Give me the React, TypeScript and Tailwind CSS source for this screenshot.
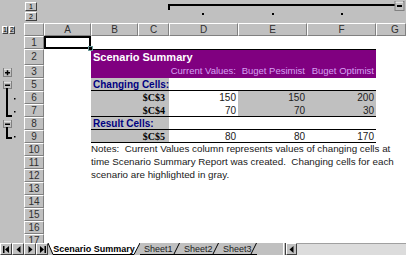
import React from "react";

const hdr =
  "flex items-center justify-center bg-[#c0c0c0] border-t border-t-white border-l border-l-white border-r border-r-[#808080] border-b border-b-[#808080] text-[10px] text-[#303030] leading-none";

const btn =
  "flex items-center justify-center bg-[#c0c0c0] border-t border-t-white border-l border-l-white border-r border-r-[#404040] border-b border-b-[#404040] text-[7px] leading-none text-black";

function RowHead({ n }: { n: number }) {
  return <div className={`w-[20px] shrink-0 h-full ${hdr}`}>{n}</div>;
}

function Row({ n, h, children }: { n: number; h?: string; children?: React.ReactNode }) {
  return (
    <div className={`flex shrink-0 ${h ?? "h-[13px]"}`}>
      <RowHead n={n} />
      <div className="flex flex-1 h-full bg-white">
        <div className="w-[47px] shrink-0" />
        {children}
      </div>
    </div>
  );
}

function Val({ w, grey, children }: { w: string; grey?: boolean; children?: React.ReactNode }) {
  return (
    <div
      className={`${w} shrink-0 h-full flex items-center justify-end pr-[2px] text-[10px] text-[#202020] ${
        grey ? "bg-[#c0c0c0]" : "bg-white"
      }`}
    >
      {children}
    </div>
  );
}

function Label({ children }: { children: React.ReactNode }) {
  return (
    <div className="w-[78px] shrink-0 h-full bg-[#c0c0c0] flex items-center pl-[2px] text-[10px] font-bold text-[#000080] whitespace-nowrap">
      {children}
    </div>
  );
}

function Ref({ children }: { children: React.ReactNode }) {
  return (
    <div className="w-[78px] shrink-0 h-full bg-[#c0c0c0] flex items-center justify-end pr-[4px] font-['Liberation_Serif',serif] text-[10px] font-bold text-black">
      {children}
    </div>
  );
}

function DataRow({ n, r, v, greyScen, line }: { n: number; r: string; v: string[]; greyScen?: boolean; line?: boolean }) {
  return (
    <Row n={n}>
      <div className={`flex h-full ${line ? "border-b border-black" : ""}`}>
        <Ref>{r}</Ref>
        <Val w="w-[69px]">{v[0]}</Val>
        <Val w="w-[69px]" grey={greyScen}>{v[1]}</Val>
        <Val w="w-[69px]" grey={greyScen}>{v[2]}</Val>
      </div>
    </Row>
  );
}

function Note({ n, text }: { n: number; text?: string }) {
  return (
    <Row n={n}>
      <div className="flex items-center h-full whitespace-pre text-[9.8px] text-[#202020]">{text}</div>
    </Row>
  );
}

function NavIcon({ kind }: { kind: "first" | "prev" | "next" | "last" }) {
  return (
    <svg width="7" height="7" viewBox="0 0 7 7">
      {kind === "first" && (
        <>
          <rect x="0" y="0" width="1.5" height="7" fill="#000" />
          <polygon points="6,0 2,3.5 6,7" fill="#000" />
        </>
      )}
      {kind === "prev" && <polygon points="5.5,0 1.5,3.5 5.5,7" fill="#000" />}
      {kind === "next" && <polygon points="1.5,0 5.5,3.5 1.5,7" fill="#000" />}
      {kind === "last" && (
        <>
          <polygon points="1,0 5,3.5 1,7" fill="#000" />
          <rect x="5.5" y="0" width="1.5" height="7" fill="#000" />
        </>
      )}
    </svg>
  );
}

function Tab({ w, label, active }: { w: string; label: string; active?: boolean }) {
  return (
    <div className={`${w} shrink-0 h-full relative flex items-center ${active ? "justify-center" : "pl-[4px]"}`}>
      <svg className="absolute inset-0" width="100%" height="12" preserveAspectRatio="none">
        {active ? (
          <>
            <polygon points="0,0 92,0 86,11.5 5,11.5" fill="#fff" />
            <line x1="0" y1="0" x2="5" y2="11.5" stroke="#000" />
            <line x1="5" y1="11.5" x2="86" y2="11.5" stroke="#000" />
            <line x1="86" y1="11.5" x2="92" y2="0" stroke="#000" />
          </>
        ) : (
          <line x1="0" y1="11.5" x2="100%" y2="11.5" stroke="#000" />
        )}
      </svg>
      {!active && (
        <svg className="absolute right-0 top-0" width="7" height="12">
          <line x1="0.5" y1="12" x2="6.5" y2="0" stroke="#000" />
        </svg>
      )}
      <span className={`relative text-[9px] leading-none ${active ? "font-bold text-black" : "text-[#202020]"}`}>
        {label}
      </span>
    </div>
  );
}

export default function App() {
  return (
    <div className="w-[406px] h-[255px] overflow-hidden bg-[#c0c0c0] flex flex-col font-['Liberation_Sans',Arial,sans-serif] select-none">
      {/* column outline strip */}
      <div className="h-[23px] shrink-0 flex">
        <div className="w-[25px] shrink-0" />
        <div className="w-[12px] shrink-0 flex flex-col gap-[1px] pt-[2px]">
          <div className={`h-[9px] ${btn}`}>1</div>
          <div className={`h-[9px] ${btn}`}>2</div>
        </div>
        <div className="flex-1 relative">
          <svg className="absolute inset-0" width="369" height="23">
            <line x1="131" y1="5" x2="358" y2="5" stroke="#000" strokeWidth="2" />
            <line x1="132" y1="5" x2="132" y2="10" stroke="#000" strokeWidth="2" />
            <rect x="165" y="13" width="2" height="2" fill="#000" />
            <rect x="235" y="13" width="2" height="2" fill="#000" />
            <rect x="304" y="13" width="2" height="2" fill="#000" />
            <rect x="358" y="1.5" width="9" height="9" fill="#c0c0c0" stroke="#808080" />
            <line x1="358.5" y1="2" x2="366" y2="2" stroke="#fff" />
            <rect x="360" y="5" width="5" height="2" fill="#000" />
          </svg>
        </div>
      </div>

      {/* column headers */}
      <div className="h-[13px] shrink-0 flex">
        <div className="w-[24px] shrink-0 flex items-center gap-[1px] pl-[2px]">
          <div className={`w-[6px] h-[8px] ${btn}`}>1</div>
          <div className={`w-[6px] h-[8px] ${btn}`}>2</div>
        </div>
        <div className={`w-[20px] shrink-0 ${hdr}`} />
        <div className={`w-[47px] shrink-0 ${hdr}`}>A</div>
        <div className={`w-[47px] shrink-0 ${hdr}`}>B</div>
        <div className={`w-[31px] shrink-0 ${hdr}`}>C</div>
        <div className={`w-[69px] shrink-0 ${hdr}`}>D</div>
        <div className={`w-[69px] shrink-0 ${hdr}`}>E</div>
        <div className={`w-[69px] shrink-0 ${hdr}`}>F</div>
        <div className={`flex-1 pl-[8px] ${hdr}`}>G</div>
      </div>

      {/* sheet body */}
      <div className="flex flex-1 min-h-0 overflow-hidden">
        <div className="w-[24px] shrink-0 relative">
          <svg className="absolute inset-0" width="24" height="207">
            {/* + at row 3 */}
            <rect x="3.5" y="32.5" width="8" height="8" fill="#c0c0c0" stroke="#808080" />
            <line x1="4" y1="33" x2="11" y2="33" stroke="#fff" />
            <rect x="5" y="36" width="5" height="1.5" fill="#000" />
            <rect x="6.75" y="34.25" width="1.5" height="5" fill="#000" />
            {/* - at row 5 */}
            <rect x="3.5" y="45.5" width="8" height="7" fill="#c0c0c0" stroke="#808080" />
            <line x1="4" y1="46" x2="11" y2="46" stroke="#fff" />
            <rect x="5" y="48.5" width="5" height="1.5" fill="#000" />
            <line x1="7" y1="52" x2="7" y2="81" stroke="#000" strokeWidth="2" />
            <line x1="6" y1="80" x2="12" y2="80" stroke="#000" strokeWidth="2" />
            <rect x="14" y="62" width="1.5" height="1.5" fill="#000" />
            <rect x="14" y="75" width="1.5" height="1.5" fill="#000" />
            {/* - at row 8 */}
            <rect x="3.5" y="84.5" width="8" height="7" fill="#c0c0c0" stroke="#808080" />
            <line x1="4" y1="85" x2="11" y2="85" stroke="#fff" />
            <rect x="5" y="87.5" width="5" height="1.5" fill="#000" />
            <line x1="7" y1="91" x2="7" y2="103" stroke="#000" strokeWidth="2" />
            <line x1="6" y1="102" x2="12" y2="102" stroke="#000" strokeWidth="2" />
            <rect x="14" y="100" width="1.5" height="1.5" fill="#000" />
          </svg>
        </div>

        <div className="flex-1 flex flex-col">
          <div className="flex shrink-0 h-[13px]">
            <RowHead n={1} />
            <div className="flex flex-1 h-full bg-white">
              <div className="w-[47px] shrink-0 h-full border-2 border-black relative">
                <div className="absolute -right-[4px] -bottom-[4px] w-[5px] h-[5px] bg-black border border-[#6a9a9a]" />
              </div>
            </div>
          </div>

          <Row n={2} h="h-[16px]">
            <div className="w-[285px] shrink-0 h-full bg-[#800080] border-t border-black flex items-center pl-[2px] text-[11px] font-bold text-white">
              Scenario Summary
            </div>
          </Row>

          <Row n={3}>
            <div className="w-[285px] shrink-0 h-full bg-[#800080] flex text-[9.5px] text-[#d6a0f2]">
              <div className="w-[78px] shrink-0" />
              <div className="w-[69px] shrink-0 flex items-center justify-end pr-[2px] whitespace-nowrap">Current Values:</div>
              <div className="w-[69px] shrink-0 flex items-center justify-end pr-[2px] whitespace-nowrap">Buget Pesimist</div>
              <div className="w-[69px] shrink-0 flex items-center justify-end pr-[2px] whitespace-nowrap">Buget Optimist</div>
            </div>
          </Row>

          <Row n={5}>
            <div className="flex h-full w-[285px] border-b border-black">
              <Label>Changing Cells:</Label>
            </div>
          </Row>
          <DataRow n={6} r="$C$3" v={["150", "150", "200"]} greyScen />
          <DataRow n={7} r="$C$4" v={["70", "70", "30"]} greyScen line />
          <Row n={8}>
            <div className="flex h-full w-[285px] border-b border-black">
              <Label>Result Cells:</Label>
            </div>
          </Row>
          <DataRow n={9} r="$C$5" v={["80", "80", "170"]} line />

          <Note n={10} text="Notes:  Current Values column represents values of changing cells at" />
          <Note n={11} text="time Scenario Summary Report was created.  Changing cells for each" />
          <Note n={12} text="scenario are highlighted in gray." />
          {[13, 14, 15, 16, 17].map((n) => (
            <Note key={n} n={n} />
          ))}
        </div>
      </div>

      {/* sheet tabs */}
      <div className="h-[12px] shrink-0 flex bg-[#c0c0c0]">
        {(["first", "prev", "next", "last"] as const).map((k) => (
          <div key={k} className={`w-[12px] h-full shrink-0 ${btn}`}>
            <NavIcon kind={k} />
          </div>
        ))}
        <Tab w="w-[92px]" label="Scenario Summary" active />
        <Tab w="w-[40px]" label="Sheet1" />
        <Tab w="w-[39px]" label="Sheet2" />
        <Tab w="w-[38px]" label="Sheet3" />
        <div className="flex-1 h-full" />
        <div className="w-[3px] h-full shrink-0 border-l border-l-white border-r border-r-[#404040]" />
        <div className={`w-[11px] h-full shrink-0 ${btn}`}>
          <NavIcon kind="prev" />
        </div>
        <div className="w-[109px] h-full shrink-0 bg-[#dcdcdc] border-t border-t-[#a0a0a0]" />
      </div>
    </div>
  );
}
